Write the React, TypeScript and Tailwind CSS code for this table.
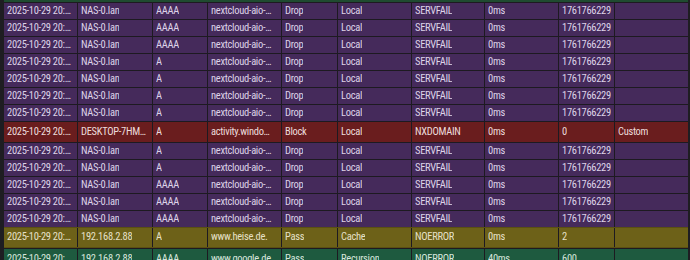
type Row = {
  kind: "drop" | "block" | "pass-cache" | "pass-rec";
  time: string;
  client: string;
  type: string;
  domain: string;
  action: string;
  source: string;
  rcode: string;
  duration: string;
  ttl: string;
  list: string;
};

const dropRow = (type: string): Row => ({
  kind: "drop",
  time: "2025-10-29 20:41:07",
  client: "NAS-0.lan",
  type,
  domain: "nextcloud-aio-domaincheck.local.",
  action: "Drop",
  source: "Local",
  rcode: "SERVFAIL",
  duration: "0ms",
  ttl: "1761766229",
  list: "",
});

const rows: Row[] = [
  dropRow("AAAA"),
  dropRow("AAAA"),
  dropRow("AAAA"),
  dropRow("A"),
  dropRow("A"),
  dropRow("A"),
  dropRow("A"),
  {
    kind: "block",
    time: "2025-10-29 20:41:06",
    client: "DESKTOP-7HMQ2KD.lan",
    type: "A",
    domain: "activity.windows.com.",
    action: "Block",
    source: "Local",
    rcode: "NXDOMAIN",
    duration: "0ms",
    ttl: "0",
    list: "Custom",
  },
  dropRow("A"),
  dropRow("A"),
  dropRow("AAAA"),
  dropRow("AAAA"),
  dropRow("AAAA"),
  {
    kind: "pass-cache",
    time: "2025-10-29 20:41:05",
    client: "192.168.2.88",
    type: "A",
    domain: "www.heise.de.",
    action: "Pass",
    source: "Cache",
    rcode: "NOERROR",
    duration: "0ms",
    ttl: "2",
    list: "",
  },
  {
    kind: "pass-rec",
    time: "2025-10-29 20:41:05",
    client: "192.168.2.88",
    type: "AAAA",
    domain: "www.google.de.",
    action: "Pass",
    source: "Recursion",
    rcode: "NOERROR",
    duration: "40ms",
    ttl: "600",
    list: "",
  },
];

const rowStyle: Record<Row["kind"], string> = {
  drop: "h-[17px] bg-[#452a5b] text-[#ddd3e8]",
  block: "h-[21px] bg-[#6a1d1e] text-[#ecdcdc]",
  "pass-cache": "h-[21px] bg-[#6d6118] text-[#e6e0c8] border-y border-[#5a5012]",
  "pass-rec": "h-[21px] bg-[#1e5a3f] text-[#d6e6dc]",
};

function Cell({ text, first, tight }: { text: string; first?: boolean; tight?: boolean }) {
  return (
    <div
      className={
        "flex items-center overflow-hidden pl-[3px] " +
        (tight ? "pr-0 " : "pr-[5px] ") +
        (first ? "" : "border-l border-[#1d1a21]")
      }
    >
      <span className="truncate">{text}</span>
    </div>
  );
}

export default function App() {
  return (
    <div className="h-[260px] w-[690px] overflow-hidden bg-[#1e1d22] pl-[4px] pr-[2px] [font-family:'Roboto_Condensed',sans-serif] text-[10.5px] leading-none tracking-[-0.3px]">
      <div className="h-[2px] bg-[#1f4b30]" />
      <div className="flex flex-col">
        {rows.map((r, i) => (
          <div
            key={i}
            className={
              "grid grid-cols-[73px_75px_55px_74px_56px_74px_73px_74px_56px_74px] border-t border-[#1d1a21] " +
              rowStyle[r.kind]
            }
          >
            <Cell text={r.time} first />
            <Cell text={r.client} />
            <Cell text={r.type} />
            <Cell text={r.domain} />
            <Cell text={r.action} />
            <Cell text={r.source} />
            <Cell text={r.rcode} />
            <Cell text={r.duration} />
            <Cell text={r.ttl} tight />
            <Cell text={r.list} />
          </div>
        ))}
      </div>
    </div>
  );
}
